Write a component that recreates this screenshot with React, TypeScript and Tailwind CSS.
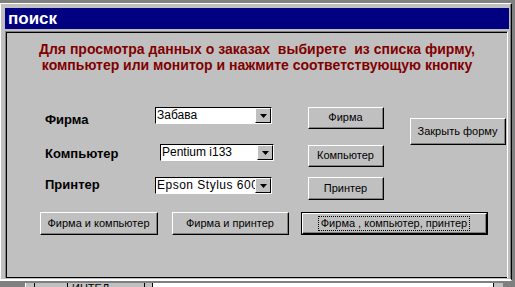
import React from "react";

function Btn({
  w,
  h,
  children,
  isDefault,
  focus,
}: {
  w: number;
  h: number;
  children: React.ReactNode;
  isDefault?: boolean;
  focus?: boolean;
}) {
  const inner = (
    <div className="h-full w-full bg-[#c0c0c0] border border-t-white border-l-white border-r-black border-b-black">
      <div className="h-full w-full border-r border-b border-r-[#808080] border-b-[#808080] border-t-0 border-l-0 flex items-center justify-center">
        {focus ? (
          <span className="outline outline-1 outline-dotted outline-black px-[2px] leading-[13px]">{children}</span>
        ) : (
          <span className="leading-[13px]">{children}</span>
        )}
      </div>
    </div>
  );
  return (
    <div
      className={isDefault ? "border border-black shrink-0" : "shrink-0"}
      style={{ width: w, height: h }}
    >
      {inner}
    </div>
  );
}

function Combo({ w, text, wide }: { w: number; text: string; wide?: boolean }) {
  return (
    <div
      className="shrink-0 h-[17px] flex bg-white border-t border-l border-t-black border-l-black border-r border-b border-r-white border-b-white"
      style={{ width: w }}
    >
      <div
        className={
          wide
            ? "flex-1 overflow-hidden whitespace-nowrap pl-[1px] text-[12px] leading-[15px] text-black tracking-[0.5px]"
            : "flex-1 overflow-hidden whitespace-nowrap pl-[1px] text-[12px] leading-[15px] text-black"
        }
      >
        {text}
      </div>
      <div className="w-[16px] h-[15px] shrink-0 bg-[#c0c0c0] border border-t-white border-l-white border-r-black border-b-black flex items-center justify-center">
        <svg width="7" height="4" viewBox="0 0 7 4">
          <polygon points="0,0 7,0 3.5,4" fill="#000" />
        </svg>
      </div>
    </div>
  );
}

export default function App() {
  return (
    <div className="w-[515px] h-[287px] bg-[#808080] overflow-hidden font-['Liberation_Sans',Arial,sans-serif]">
      <div className="h-[3px]" />
      {/* window */}
      <div className="w-[512px] h-[278px] border-t border-l border-t-white border-l-white border-r border-r-black border-b-2 border-b-white bg-[#c0c0c0]">
        <div className="h-full w-full border-r border-r-[#808080] pl-[4px] pt-[4px]">
          {/* title bar */}
          <div className="w-[504px] h-[21px] bg-[#000080] flex items-center pl-[3px]">
            <span className="text-white font-bold text-[17px] leading-[18px]">поиск</span>
          </div>
          <div className="h-[2px]" />
          {/* client */}
          <div className="w-[503px] h-[247px] border-t border-l border-t-[#808080] border-l-[#808080] border-r border-r-white">
            <div className="h-full w-full border-t border-l border-b border-black flex flex-col">
              <div className="h-[74px] pt-[8px] text-center text-[#800000] font-bold text-[14px] leading-[16px] whitespace-pre">
                <div>Для просмотра данных о заказах  выбирете  из списка фирму,</div>
                <div>компьютер или монитор и нажмите соответствующую кнопку</div>
              </div>
              {/* row 1 */}
              <div className="h-[37px] flex items-start">
                <div className="ml-[38px] w-[110px] mt-[5px] font-bold text-[13px] leading-[16px] text-black">Фирма</div>
                <Combo w={117} text="Забава" />
                <div className="ml-[36px] text-[11px] text-black">
                  <Btn w={76} h={22}>Фирма</Btn>
                </div>
                <div className="ml-[26px] mt-[11px] text-[11px] text-black">
                  <Btn w={96} h={27}>Закрыть форму</Btn>
                </div>
              </div>
              {/* row 2 */}
              <div className="h-[33px] flex items-start">
                <div className="ml-[38px] w-[115px] mt-[2px] font-bold text-[13px] leading-[16px] text-black">Компьютер</div>
                <Combo w={114} text="Pentium i133" />
                <div className="ml-[34px] mt-[1px] text-[11px] text-black">
                  <Btn w={76} h={22}>Компьютер</Btn>
                </div>
              </div>
              {/* row 3 */}
              <div className="h-[35px] flex items-start">
                <div className="ml-[38px] w-[110px] font-bold text-[13px] leading-[16px] text-black">Принтер</div>
                <Combo w={117} text="Epson Stylus 600" wide />
                <div className="ml-[36px] text-[11px] text-black">
                  <Btn w={76} h={23}>Принтер</Btn>
                </div>
              </div>
              {/* row 4 */}
              <div className="flex items-start text-[11px] text-black">
                <div className="ml-[33px]">
                  <Btn w={118} h={23}>Фирма и компьютер</Btn>
                </div>
                <div className="ml-[14px]">
                  <Btn w={117} h={23}>Фирма и принтер</Btn>
                </div>
                <div className="ml-[12px]">
                  <Btn w={187} h={23} isDefault focus>
                    Фирма , компьютер, принтер
                  </Btn>
                </div>
              </div>
            </div>
          </div>
        </div>
      </div>
      {/* background window strip */}
      <div className="h-[2px]" />
      <div className="h-[5px] flex">
        <div className="w-[25px] bg-[#808080]" />
        <div className="w-[10px] bg-[#c0c0c0] border-l border-l-white border-r border-r-black" />
        <div className="w-[33px] bg-[#c0c0c0] border-r border-r-black" />
        <div className="w-[77px] bg-[#c0c0c0] border-r border-r-black overflow-hidden text-[11px] leading-[11px] pl-[4px] text-black">
          ИНТЕЛ
        </div>
        <div className="w-[8px] bg-[#c0c0c0] border-r border-r-black" />
        <div className="w-[340px] bg-white" />
        <div className="w-[10px] bg-[#c0c0c0] border-l border-l-black" />
      </div>
    </div>
  );
}
